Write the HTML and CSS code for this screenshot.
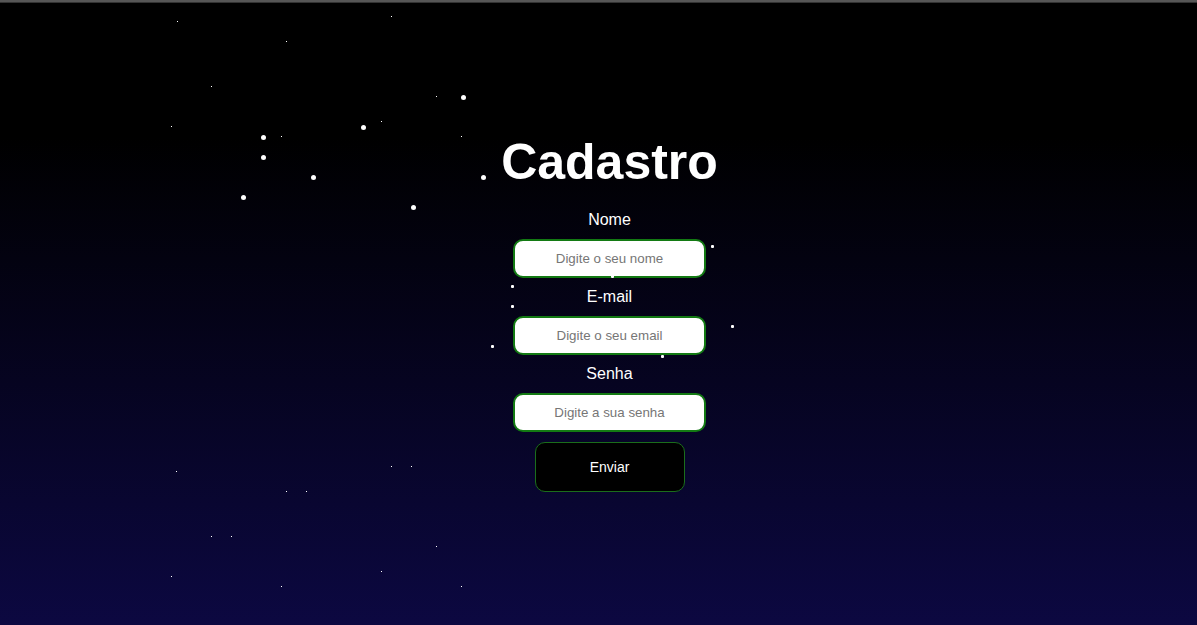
FILE: index.html
```html
<!DOCTYPE html>
<html lang="pt-BR">
<head>
<meta charset="UTF-8">
<title>Cadastro</title>
<link rel="stylesheet" href="styles.css">
</head>
<body>
<div class="topbar"></div>
<main class="page">
  <h1 class="title">Cadastro</h1>
  <form class="form">
    <label class="label" for="nome">Nome</label>
    <input class="field" id="nome" type="text" placeholder="Digite o seu nome">
    <label class="label" for="email">E-mail</label>
    <input class="field" id="email" type="email" placeholder="Digite o seu email">
    <label class="label" for="senha">Senha</label>
    <input class="field" id="senha" type="password" placeholder="Digite a sua senha">
    <button class="submit" type="button">Enviar</button>
  </form>
</main>
<div class="sky" aria-hidden="true">
  <span class="star star-sm"></span>
  <span class="star star-md"></span>
  <span class="star star-lg"></span>
</div>
</body>
</html>
```
FILE: styles.css
```css
* { box-sizing: border-box; }
html, body { height: 100%; }
body {
  margin: 0;
  min-height: 625px;
  font-family: "Liberation Sans", Arial, sans-serif;
  color: #fff;
  background: linear-gradient(to bottom, #000 22%, #0c0841 100%);
  position: relative;
  overflow: hidden;
}
.topbar {
  height: 3px;
  background: #565656;
  border-bottom: 1px solid #333;
}
.sky {
  position: absolute;
  inset: 0;
  z-index: 2;
  pointer-events: none;
}
.star {
  position: absolute;
  left: 0;
  top: 0;
  display: block;
  background: transparent;
}
.star-sm {
  width: 1px;
  height: 1px;
  box-shadow:
    177px 21px #fff, 286px 41px #fff, 391px 16px #fff, 211px 86px #fff,
    171px 126px #fff, 281px 136px #fff, 436px 96px #fff, 381px 121px #fff,
    461px 136px #fff,
    176px 471px #fff, 286px 491px #fff, 306px 491px #fff, 391px 466px #fff,
    411px 466px #fff, 211px 536px #fff, 231px 536px #fff, 436px 546px #fff,
    171px 576px #fff, 281px 586px #fff, 381px 571px #fff, 461px 586px #fff;
}
.star-md {
  width: 3px;
  height: 3px;
  border-radius: 1px;
  box-shadow:
    711px 245px #fff, 611px 275px #fff, 511px 285px #fff, 511px 305px #fff,
    731px 325px #fff, 491px 345px #fff, 661px 355px #fff;
}
.star-lg {
  width: 5px;
  height: 5px;
  border-radius: 50%;
  box-shadow:
    261px 135px #fff, 261px 155px #fff, 311px 175px #fff, 361px 125px #fff,
    461px 95px #fff, 411px 205px #fff, 241px 195px #fff, 481px 175px #fff;
}
.page {
  position: relative;
  z-index: 1;
  display: flex;
  flex-direction: column;
  align-items: center;
  padding-top: 131px;
  padding-left: 22px;
}
.title {
  margin: 0;
  font-size: 50px;
  line-height: 56px;
  font-weight: bold;
}
.form {
  display: flex;
  flex-direction: column;
  align-items: center;
  margin-top: 20px;
}
.label {
  display: block;
  font-size: 16px;
  line-height: 18px;
  margin-top: 1px;
  margin-bottom: 10px;
}
.field {
  width: 193px;
  height: 39px;
  margin: 0 0 9px;
  padding: 0 10px;
  border: 2px solid #137a13;
  border-radius: 10px;
  background: #fff;
  font-family: "Liberation Sans", Arial, sans-serif;
  font-size: 13.333px;
  color: #222;
  text-align: center;
  outline: none;
}
.field::placeholder { color: #767676; }
.field:last-of-type { margin-bottom: 10px; }
.submit {
  width: 150px;
  height: 50px;
  background: #000;
  color: #fff;
  border: 1px solid #1b6e1b;
  border-radius: 10px;
  font-family: "Liberation Sans", Arial, sans-serif;
  font-size: 14px;
}
```
